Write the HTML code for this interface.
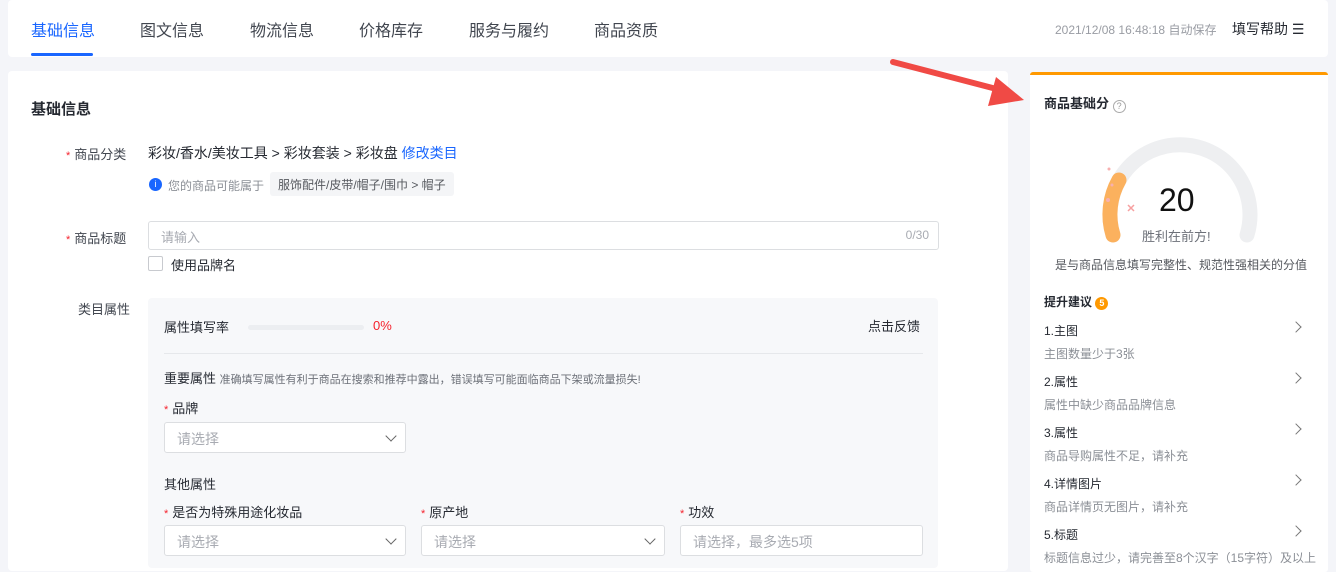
<!DOCTYPE html>
<html><head><meta charset="utf-8"><style>
*{margin:0;padding:0;box-sizing:border-box}
body{width:1336px;height:565px;background:#f4f5f9;font-family:"Liberation Sans","Noto Sans CJK SC",sans-serif;color:#252931;position:relative;overflow:hidden;font-size:13px}
.a{position:absolute;white-space:nowrap}
.card{position:absolute;background:#fff;border-radius:4px}
.tab{position:absolute;top:17px;font-size:16px;color:#41464f}
.star{color:#f5222d;font-size:11px;margin-right:4px}
.lbl{font-size:13px;color:#41464f}
.inp{position:absolute;background:#fff;border:1px solid #dcdee1;border-radius:3px;height:31px;font-size:14px;color:#a8abb2;padding:6px 12px}
.chev{position:absolute;right:10px;top:9px;width:8px;height:8px;border-right:1.4px solid #666;border-bottom:1.4px solid #666;transform:rotate(45deg)}
.sug{position:absolute;left:1044px;font-size:12px}
.sug b{font-weight:normal;color:#252931;display:block}
.sug i{font-style:normal;color:#8b8f96;display:block;margin-top:6px}
.arr{position:absolute;left:1292px;width:8px;height:8px;border-right:1.3px solid #777;border-top:1.3px solid #777;transform:rotate(45deg)}
</style></head><body>
<div class="card" style="left:8px;top:0;width:1320px;height:57px"></div>
<div class="tab" style="left:31px;color:#1966ff">基础信息</div>
<div class="a" style="left:31px;top:53px;width:62px;height:3px;background:#1966ff;border-radius:2px"></div>
<div class="tab" style="left:140px">图文信息</div>
<div class="tab" style="left:250px">物流信息</div>
<div class="tab" style="left:359px">价格库存</div>
<div class="tab" style="left:469px">服务与履约</div>
<div class="tab" style="left:594px">商品资质</div>
<div class="a" style="left:1055px;top:21px;font-size:12px;color:#999ca3">2021/12/08 16:48:18 自动保存</div>
<div class="a" style="left:1232px;top:19px;font-size:14px;color:#252931">填写帮助 ☰</div>

<div class="card" style="left:8px;top:71px;width:1000px;height:500px"></div>
<div class="a" style="left:31px;top:98px;font-size:15px;font-weight:bold">基础信息</div>
<div class="a lbl" style="left:66px;top:144px"><span class="star">*</span>商品分类</div>
<div class="a" style="left:148px;top:143px;font-size:14px">彩妆/香水/美妆工具 &gt; 彩妆套装 &gt; 彩妆盘 <span style="color:#1966ff">修改类目</span></div>
<div class="a" style="left:149px;top:178px;width:13px;height:13px;border-radius:50%;background:#1966ff;color:#fff;font-size:9px;text-align:center;line-height:13px">i</div>
<div class="a" style="left:168px;top:177px;font-size:12px;color:#8b8f96">您的商品可能属于</div>
<div class="a" style="left:270px;top:172px;height:24px;padding:4px 8px;background:#f4f5f7;border-radius:3px;font-size:12px;color:#55585e">服饰配件/皮带/帽子/围巾 &gt; 帽子</div>
<div class="a lbl" style="left:66px;top:228px"><span class="star">*</span>商品标题</div>
<div class="inp" style="left:148px;top:221px;width:791px;height:29px;font-size:13px;padding:5px 12px">请输入<span style="position:absolute;right:9px;top:6px;font-size:12px">0/30</span></div>
<div class="a" style="left:148px;top:256px;width:15px;height:15px;border:1px solid #c8cacf;border-radius:2px;background:#fff"></div>
<div class="a" style="left:171px;top:255px;font-size:13px">使用品牌名</div>
<div class="a lbl" style="left:78px;top:299px">类目属性</div>

<div class="a" style="left:148px;top:298px;width:790px;height:270px;background:#f7f8fa;border-radius:4px"></div>
<div class="a" style="left:164px;top:317px;font-size:13px">属性填写率</div>
<div class="a" style="left:248px;top:325px;width:116px;height:5px;background:#eceef1;border-radius:3px"></div>
<div class="a" style="left:373px;top:318px;font-size:13px;color:#f5222d">0%</div>
<div class="a" style="left:868px;top:316px;font-size:13px">点击反馈</div>
<div class="a" style="left:164px;top:353px;width:759px;height:1px;background:#e6e8eb"></div>
<div class="a" style="left:164px;top:368px;font-size:13px">重要属性 <span style="font-size:11px;color:#6c7078">准确填写属性有利于商品在搜索和推荐中露出，错误填写可能面临商品下架或流量损失!</span></div>
<div class="a" style="left:164px;top:398px;font-size:13px"><span class="star">*</span>品牌</div>
<div class="inp" style="left:164px;top:422px;width:242px">请选择<div class="chev"></div></div>
<div class="a" style="left:164px;top:474px;font-size:13px">其他属性</div>
<div class="a" style="left:164px;top:502px;font-size:13px"><span class="star">*</span>是否为特殊用途化妆品</div>
<div class="inp" style="left:164px;top:525px;width:242px">请选择<div class="chev"></div></div>
<div class="a" style="left:421px;top:502px;font-size:13px"><span class="star">*</span>原产地</div>
<div class="inp" style="left:421px;top:525px;width:244px">请选择<div class="chev"></div></div>
<div class="a" style="left:680px;top:502px;font-size:13px"><span class="star">*</span>功效</div>
<div class="inp" style="left:680px;top:525px;width:243px">请选择，最多选5项</div>

<div class="card" style="left:1030px;top:72px;width:298px;height:500px;border-top:3px solid #ff9900;border-radius:3px"></div>
<div class="a" style="left:1044px;top:93px;font-size:13px;font-weight:bold">商品基础分 <span style="display:inline-block;width:13px;height:13px;border:1px solid #aaa;border-radius:50%;font-size:9px;color:#999;text-align:center;line-height:11px;font-weight:normal;vertical-align:-1px">?</span></div>
<svg class="a" style="left:1090px;top:125px" width="180" height="120" viewBox="0 0 180 120">
<path d="M23 110 A70 70 0 1 1 157 110" fill="none" stroke="#eeeff1" stroke-width="15" stroke-linecap="round"/>
<path d="M23 110 A70 70 0 0 1 29 55" fill="none" stroke="#fbb15e" stroke-width="15" stroke-linecap="round"/>
<path d="M38 80 l6 6 M44 80 l-6 6" stroke="#f7a0a0" stroke-width="1.5"/>
<circle cx="18" cy="75" r="2" fill="#f7b0b0"/><circle cx="22" cy="60" r="1.5" fill="#f7b0b0"/><circle cx="19" cy="44" r="1.5" fill="#f7b0b0"/>
</svg>
<div class="a" style="left:1159px;top:182px;font-size:32px;color:#111">20</div>
<div class="a" style="left:1142px;top:226px;font-size:13px;color:#6c7078">胜利在前方!</div>
<div class="a" style="left:1055px;top:256px;font-size:12px;color:#55585e">是与商品信息填写完整性、规范性强相关的分值</div>
<div class="a" style="left:1044px;top:293px;font-size:12px;font-weight:bold">提升建议 <span style="display:inline-block;width:13px;height:13px;border-radius:50%;background:#ff9900;color:#fff;font-size:9px;text-align:center;line-height:13px">5</span></div>
<div class="sug" style="top:322px"><b>1.主图</b><i>主图数量少于3张</i></div><div class="arr" style="top:323px"></div>
<div class="sug" style="top:373px"><b>2.属性</b><i>属性中缺少商品品牌信息</i></div><div class="arr" style="top:374px"></div>
<div class="sug" style="top:424px"><b>3.属性</b><i>商品导购属性不足，请补充</i></div><div class="arr" style="top:425px"></div>
<div class="sug" style="top:475px"><b>4.详情图片</b><i>商品详情页无图片，请补充</i></div><div class="arr" style="top:476px"></div>
<div class="sug" style="top:526px"><b>5.标题</b><i>标题信息过少，请完善至8个汉字（15字符）及以上</i></div><div class="arr" style="top:527px"></div>

<svg class="a" style="left:880px;top:50px" width="160" height="70">
<path d="M13 12 L128 42" stroke="#f04a45" stroke-width="6" stroke-linecap="round"/>
<path d="M116 27 L144 50 L108 56 Z" fill="#f04a45"/>
</svg>
</body></html>
